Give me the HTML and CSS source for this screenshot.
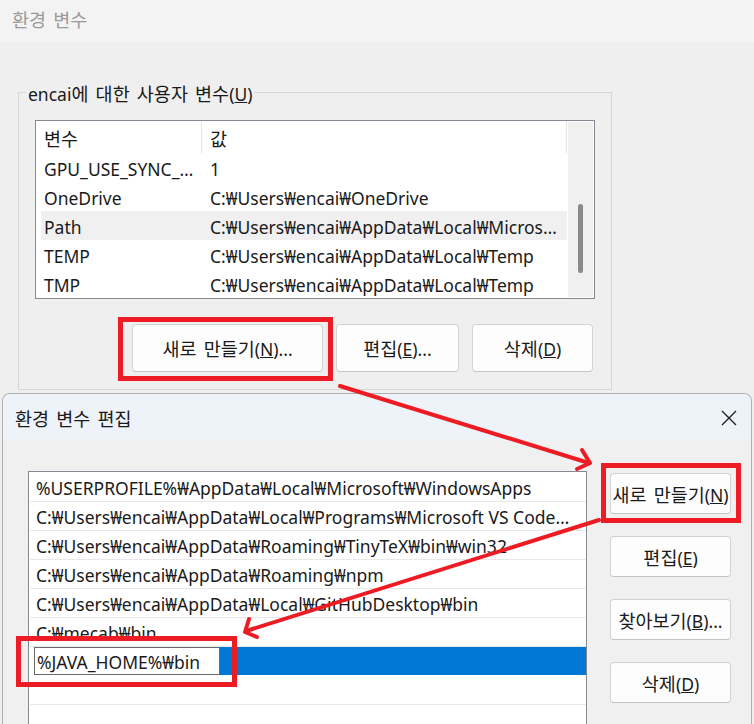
FILE: index.html
```html
<!DOCTYPE html>
<html lang="ko">
<head>
<meta charset="utf-8">
<title>환경 변수</title>
<link rel="stylesheet" href="styles.css">
</head>
<body>
<div class="screen">
  <section class="win1">
    <header class="win1-title"><span class="ko">환경 변수</span></header>
    <fieldset class="group">
      <legend>encai<span class="ko">에 대한 사용자 변수</span>(<u>U</u>)</legend>
      <div class="listview">
        <div class="lv-main">
          <div class="lv-head"><span class="c1 ko">변수</span><span class="c2 ko">값</span></div>
          <div class="lv-row"><span class="c1">GPU_USE_SYNC_…</span><span class="c2">1</span></div>
          <div class="lv-row"><span class="c1">OneDrive</span><span class="c2">C:₩Users₩encai₩OneDrive</span></div>
          <div class="lv-row is-hover"><span class="c1">Path</span><span class="c2">C:₩Users₩encai₩AppData₩Local₩Micros…</span></div>
          <div class="lv-row"><span class="c1">TEMP</span><span class="c2">C:₩Users₩encai₩AppData₩Local₩Temp</span></div>
          <div class="lv-row"><span class="c1">TMP</span><span class="c2">C:₩Users₩encai₩AppData₩Local₩Temp</span></div>
        </div>
        <div class="vscroll"><div class="thumb"></div></div>
      </div>
      <div class="btnrow">
        <button class="btn btn-new"><span class="ko">새로 만들기</span>(<u>N</u>)...</button>
        <button class="btn btn-edit"><span class="ko">편집</span>(<u>E</u>)...</button>
        <button class="btn btn-del"><span class="ko">삭제</span>(<u>D</u>)</button>
      </div>
    </fieldset>
  </section>

  <section class="dlg">
    <header class="dlg-title">
      <span class="ko">환경 변수 편집</span>
      <svg class="close" width="16" height="16" viewBox="0 0 16 16"><path d="M1 1L15 15M15 1L1 15" stroke="#1b1b1b" stroke-width="1.3" fill="none"/></svg>
    </header>
    <div class="dlg-body">
      <div class="pathlist">
        <div class="p-row">%USERPROFILE%₩AppData₩Local₩Microsoft₩WindowsApps</div>
        <div class="p-row">C:₩Users₩encai₩AppData₩Local₩Programs₩Microsoft VS Code…</div>
        <div class="p-row">C:₩Users₩encai₩AppData₩Roaming₩TinyTeX₩bin₩win32</div>
        <div class="p-row">C:₩Users₩encai₩AppData₩Roaming₩npm</div>
        <div class="p-row">C:₩Users₩encai₩AppData₩Local₩GitHubDesktop₩bin</div>
        <div class="p-row">C:₩mecab₩bin</div>
        <div class="p-row is-selected"><span class="edit">%JAVA_HOME%₩bin</span><span class="sel-fill"></span></div>
        <div class="p-row"></div>
        <div class="p-row"></div>
      </div>
      <div class="side">
        <button class="btn sbtn"><span class="ko">새로 만들기</span>(<u>N</u>)</button>
        <button class="btn sbtn"><span class="ko">편집</span>(<u>E</u>)</button>
        <button class="btn sbtn"><span class="ko">찾아보기</span>(<u>B</u>)...</button>
        <button class="btn sbtn"><span class="ko">삭제</span>(<u>D</u>)</button>
      </div>
    </div>
  </section>

  <svg class="annot" width="754" height="724" viewBox="0 0 754 724">
    <g fill="none" stroke="#ed1c24" stroke-width="5">
      <rect x="120.5" y="319.5" width="210" height="59"/>
      <rect x="603.5" y="465.5" width="135" height="55"/>
      <rect x="18.5" y="638.5" width="216" height="46"/>
    </g>
    <g fill="none" stroke="#ed1c24" stroke-width="4" stroke-linecap="round" stroke-linejoin="round">
      <path d="M340 386L589 463"/>
      <path d="M582 450L590 463L577 469"/>
      <path d="M599 520L246 631"/>
      <path d="M249 619L245 632L257 637"/>
    </g>
  </svg>
</div>
</body>
</html>
```

FILE: styles.css
```css
* { box-sizing: border-box; }

html, body {
  margin: 0;
  padding: 0;
}

body {
  background: #efefef;
  font-family: "Noto Sans", "Noto Sans CJK KR", sans-serif;
  font-size: 17.5px;
  color: #1a1a1a;
}

.ko {
  font-family: "Noto Sans CJK KR", "Noto Sans", sans-serif;
  font-size: 18.5px;
  word-spacing: 2px;
}

.screen {
  position: relative;
  width: 754px;
  height: 724px;
  overflow: hidden;
  background: #efefef;
}

/* ---------- window 1 ---------- */
.win1 {
  height: 393px;
}

.win1-title {
  height: 42px;
  padding-left: 12px;
  background: #f3f3f3;
  color: #9a9a9a;
  line-height: 39px;
}

.group {
  margin: 37px 0 0 18px;
  padding: 0 0 17px 0;
  width: 594px;
  border: 1px solid #d6d6d6;
  min-width: 0;
}

.group legend {
  margin-left: 7px;
  padding: 3px 2px 0 2px;
  line-height: 22px;
}

.listview {
  margin: 15px 0 0 16px;
  width: 560px;
  height: 179px;
  border: 1px solid #848a91;
  background: #fff;
  display: flex;
}

.lv-main {
  flex: 1;
  min-width: 0;
}

.vscroll {
  width: 25px;
  margin: 1px 1px 1px 0;
  background: #f0f0f0;
  padding: 82px 0 0 10px;
}

.thumb {
  width: 5px;
  height: 69px;
  border-radius: 3px;
  background: #8a8a8a;
}

.lv-head,
.lv-row {
  display: grid;
  grid-template-columns: 161px 1fr;
  margin: 0 1px 0 5px;
  white-space: nowrap;
}

.lv-head {
  height: 32px;
  line-height: 26px;
  padding-top: 4px;
  border-right: 1px solid #e3e3e3;
}

.lv-head .c1 {
  border-right: 1px solid #e3e3e3;
  margin-top: -3px;
  padding-top: 3px;
}

.lv-row {
  height: 29px;
  line-height: 26px;
  padding-top: 3px;
}

.c1 { padding-left: 3px; overflow: hidden; }
.c2 { padding-left: 8px; overflow: hidden; }

.lv-row.is-hover {
  background: #f0f0f0;
}

.btnrow {
  display: flex;
  gap: 13px;
  margin: 25px 0 0 113px;
}

.btn {
  height: 48px;
  padding: 0;
  border: 1px solid #d2d2d2;
  border-bottom-color: #c4c4c4;
  border-radius: 4px;
  background: #fdfdfd;
  font: inherit;
  color: #1a1a1a;
  white-space: nowrap;
}

.btn-new { width: 191px; }
.btn-edit { width: 123px; }
.btn-del { width: 121px; }

/* ---------- dialog ---------- */
.dlg {
  margin-left: 2px;
  width: 750px;
  height: 340px;
  border: 1px solid #b0b0b0;
  border-bottom: 0;
  border-radius: 8px 8px 0 0;
  background: #f0f0f0;
  overflow: hidden;
}

.dlg-title {
  height: 46px;
  background: #eef2f9;
  display: flex;
  align-items: center;
  justify-content: space-between;
  padding: 2px 14px 0 12px;
}

.close {
  display: block;
}

.dlg-body {
  display: flex;
  align-items: flex-start;
  padding-left: 25px;
}

.pathlist {
  margin-top: 31px;
  width: 559px;
  height: 300px;
  border: 1px solid #848a91;
  background: #fff;
  padding-top: 1px;
}

.p-row {
  height: 29px;
  margin-left: 1px;
  padding: 3px 0 0 6px;
  line-height: 25px;
  border-bottom: 1px solid #e8e8e8;
  white-space: nowrap;
  overflow: hidden;
}

.p-row.is-selected {
  display: flex;
  padding: 0 0 0 4px;
  border-bottom-color: #ffffff;
}

.edit {
  display: block;
  flex: none;
  width: 186px;
  height: 28px;
  background: #fff;
  border: 1px solid #6a6a6a;
  padding: 2px 0 0 2px;
  line-height: 25px;
}

.sel-fill {
  flex: 1;
  height: 28px;
  background: #0078d4;
}

.side {
  margin: 33px 0 0 23px;
  display: flex;
  flex-direction: column;
  gap: 22px;
}

.sbtn {
  width: 121px;
  height: 41px;
}

/* ---------- annotations ---------- */
.annot {
  position: absolute;
  left: 0;
  top: 0;
  pointer-events: none;
}
```
